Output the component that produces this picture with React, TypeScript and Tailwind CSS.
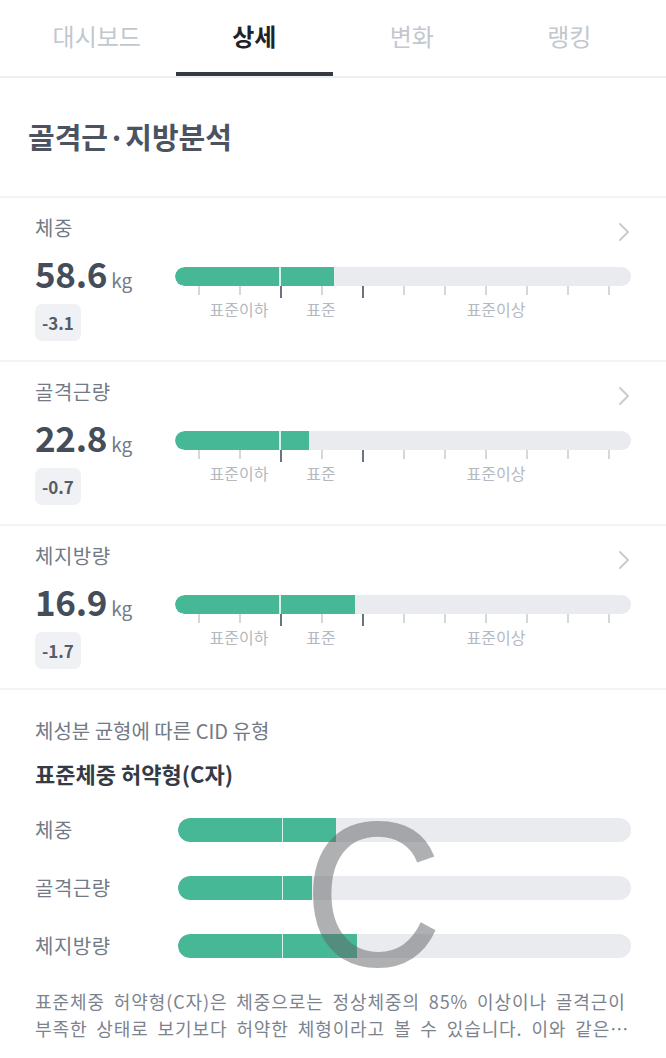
import React from 'react';

const font = { fontFamily: '"Noto Sans CJK KR", "Noto Sans", sans-serif' };

const tabs = ['대시보드', '상세', '변화', '랭킹'];

const metrics = [
    { label: '체중', value: '58.6', diff: '-3.1', fill: 159 },
    { label: '골격근량', value: '22.8', diff: '-0.7', fill: 134 },
    { label: '체지방량', value: '16.9', diff: '-1.7', fill: 180 },
];

const cidRows = [
    { label: '체중', fill: 158 },
    { label: '골격근량', fill: 134 },
    { label: '체지방량', fill: 179 },
];

const Chevron = () => (
    <svg width="14" height="20" viewBox="0 0 14 20" fill="none">
        <path d="M3 2l8 8-8 8" stroke="#c9ccd1" strokeWidth="2" strokeLinecap="round" strokeLinejoin="round" />
    </svg>
);

const ScaleBar: React.FC<{ fill: number }> = ({ fill }) => {
    const ticks = Array.from({ length: 11 }, (_, i) => 23 + i * 41);
    return (
        <div className="relative w-[456px]">
            <div className="relative h-[19px] rounded-full bg-[#e9ebef] overflow-hidden">
                <div className="absolute left-0 top-0 h-full rounded-l-full bg-[#47b896]" style={{ width: fill }} />
                <div className="absolute left-[104px] top-0 h-full w-[1.5px] bg-white/80" />
            </div>
            <div className="relative h-[30px]">
                {ticks.map((x, i) => {
                    const dark = i === 2 || i === 4;
                    return (
                        <div
                            key={x}
                            className={dark ? 'absolute top-0 w-[2px] h-[12px] bg-[#6b7280]' : 'absolute top-0 w-[1.5px] h-[9px] bg-[#d4d7dc]'}
                            style={{ left: x }}
                        />
                    );
                })}
                <span className="absolute top-[12px] left-[64px] -translate-x-1/2 text-[16px] leading-[22px] text-[#b4b9c1] whitespace-nowrap">표준이하</span>
                <span className="absolute top-[12px] left-[146px] -translate-x-1/2 text-[16px] leading-[22px] text-[#b4b9c1] whitespace-nowrap">표준</span>
                <span className="absolute top-[12px] left-[321px] -translate-x-1/2 text-[16px] leading-[22px] text-[#b4b9c1] whitespace-nowrap">표준이상</span>
            </div>
        </div>
    );
};

export default function App() {
    return (
        <div className="w-[666px] min-h-[1058px] bg-white overflow-hidden" style={font}>
            {/* tabs */}
            <div className="grid grid-cols-4 px-[18px] border-b-2 border-[#eceef1]">
                {tabs.map((t, i) => (
                    <div key={t} className="flex flex-col items-center">
                        <div className={`h-[72px] flex items-center text-[24px] ${i === 1 ? 'font-bold text-[#1f2328]' : 'text-[#c3c7ce]'}`}>
                            {t}
                        </div>
                        <div className={`h-[4px] w-full ${i === 1 ? 'bg-[#343a42]' : ''}`} />
                    </div>
                ))}
            </div>

            {/* title */}
            <div className="h-[120px] flex items-center px-[28px] border-b-2 border-[#f2f3f5]">
                <h1 className="text-[29px] font-bold text-[#4b5361]">골격근·지방분석</h1>
            </div>

            {metrics.map(m => (
                <div key={m.label} className="px-[35px] pt-[16px] pb-[19px] border-b-2 border-[#f2f3f5]">
                    <div className="flex items-center justify-between h-[28px]">
                        <span className="text-[20px] text-[#737a86] tracking-[0.5px]">{m.label}</span>
                        <span className="mt-[8px]"><Chevron /></span>
                    </div>
                    <div className="flex mt-[11px]">
                        <div className="w-[141px] flex flex-col items-start">
                            <div className="flex items-baseline h-[40px]">
                                <span className="text-[35px] leading-[40px] font-bold text-[#454d5b] tracking-[-0.3px]">{m.value}</span>
                                <span className="ml-[4px] text-[19px] text-[#737a86]">kg</span>
                            </div>
                            <div className="mt-[11px] h-[37px] px-[7px] flex items-center rounded-[7px] bg-[#f0f1f4] text-[17px] font-bold text-[#555c68]">
                                {m.diff}
                            </div>
                        </div>
                        <div className="pt-[14px]">
                            <ScaleBar fill={m.fill} />
                        </div>
                    </div>
                </div>
            ))}

            {/* CID */}
            <div className="px-[35px] pt-[27px]">
                <p className="text-[20px] leading-[28px] text-[#737a86]">체성분 균형에 따른 CID 유형</p>
                <p className="mt-[13px] text-[22px] leading-[30px] font-bold text-[#343a46]">표준체중 허약형(C자)</p>

                <div className="relative mt-[30px] flex flex-col gap-[34px]">
                    {cidRows.map(r => (
                        <div key={r.label} className="flex items-center h-[24px]">
                            <span className="w-[143px] text-[20px] text-[#737a86] tracking-[0.5px]">{r.label}</span>
                            <div className="relative h-[24px] w-[454px] rounded-full bg-[#e9ebef] overflow-hidden">
                                <div className="absolute left-0 top-0 h-full rounded-l-full bg-[#47b896]" style={{ width: r.fill }} />
                                <div className="absolute left-[104px] top-0 h-full w-[1.5px] bg-white/80" />
                            </div>
                        </div>
                    ))}
                    <span
                        className="absolute left-[263px] top-[-4px] text-[208px] leading-[160px] scale-x-[0.93] text-[rgba(95,98,102,0.5)] pointer-events-none"
                        style={{ fontFamily: '"Liberation Sans", Arial, sans-serif' }}
                    >
                        C
                    </span>
                </div>

                <div className="mt-[30px] text-[18px] leading-[27px] text-[#7c838e] tracking-[0.05em] [word-spacing:4px]">
                    <p className="whitespace-nowrap overflow-hidden">표준체중 허약형(C자)은 체중으로는 정상체중의 85% 이상이나 골격근이</p>
                    <p className="whitespace-nowrap overflow-hidden text-ellipsis">부족한 상태로 보기보다 허약한 체형이라고 볼 수 있습니다. 이와 같은 경우에는 근력 운동과 균형 잡힌 식단이 필요합니다.</p>
                </div>
            </div>
        </div>
    );
}
